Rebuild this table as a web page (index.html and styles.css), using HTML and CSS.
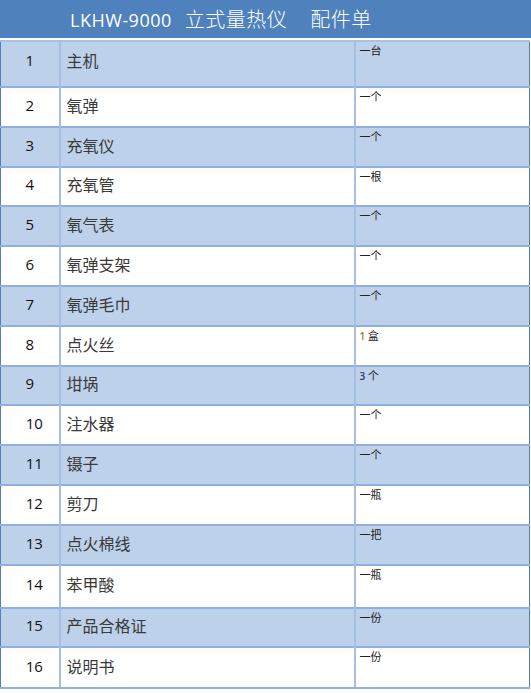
FILE: index.html
```html
<!DOCTYPE html>
<html lang="zh">
<head>
<meta charset="utf-8">
<link rel="stylesheet" href="styles.css">
</head>
<body>
<div class="sheet">
  <div class="title"><span class="model">LKHW-9000</span><span class="t1">立式量热仪</span><span class="t2">配件单</span></div>
  <table class="parts">
    <tr class="odd r1"><td class="no">1</td><td class="name">主机</td><td class="qty">一台</td></tr>
    <tr class="even"><td class="no">2</td><td class="name">氧弹</td><td class="qty">一个</td></tr>
    <tr class="odd"><td class="no">3</td><td class="name">充氧仪</td><td class="qty">一个</td></tr>
    <tr class="even"><td class="no">4</td><td class="name">充氧管</td><td class="qty">一根</td></tr>
    <tr class="odd"><td class="no">5</td><td class="name">氧气表</td><td class="qty">一个</td></tr>
    <tr class="even"><td class="no">6</td><td class="name">氧弹支架</td><td class="qty">一个</td></tr>
    <tr class="odd"><td class="no">7</td><td class="name">氧弹毛巾</td><td class="qty">一个</td></tr>
    <tr class="even"><td class="no">8</td><td class="name">点火丝</td><td class="qty"><span class="n1">1</span> 盒</td></tr>
    <tr class="odd"><td class="no">9</td><td class="name">坩埚</td><td class="qty"><span class="n3">3</span> 个</td></tr>
    <tr class="even"><td class="no dd">10</td><td class="name">注水器</td><td class="qty">一个</td></tr>
    <tr class="odd"><td class="no dd">11</td><td class="name">镊子</td><td class="qty">一个</td></tr>
    <tr class="even"><td class="no dd">12</td><td class="name">剪刀</td><td class="qty">一瓶</td></tr>
    <tr class="odd"><td class="no dd">13</td><td class="name">点火棉线</td><td class="qty">一把</td></tr>
    <tr class="even r14"><td class="no dd">14</td><td class="name">苯甲酸</td><td class="qty">一瓶</td></tr>
    <tr class="odd"><td class="no dd">15</td><td class="name">产品合格证</td><td class="qty">一份</td></tr>
    <tr class="even last"><td class="no dd">16</td><td class="name">说明书</td><td class="qty">一份</td></tr>
  </table>
</div>
</body>
</html>
```

FILE: styles.css
```css
html, body {
  margin: 0;
  padding: 0;
  background: #ffffff;
}
.sheet {
  width: 531px;
}
.title {
  height: 38px;
  background: #4f81bd;
  color: #ffffff;
  font-family: "Open Sans", "Noto Sans CJK SC", sans-serif;
  font-size: 18px;
  line-height: 37px;
  padding-left: 70px;
  box-sizing: border-box;
  margin-bottom: 2px;
  white-space: nowrap;
}
.title .model {
  letter-spacing: 0.5px;
}
.title .t1 {
  margin-left: 13px;
  font-family: "Noto Sans CJK SC", sans-serif;
  font-weight: 300;
  font-size: 20px;
  letter-spacing: 0.5px;
}
.title .t2 {
  margin-left: 23px;
  font-family: "Noto Sans CJK SC", sans-serif;
  font-weight: 300;
  font-size: 20px;
  letter-spacing: 0.5px;
}
.parts {
  width: 530px;
  border-collapse: collapse;
  table-layout: fixed;
  border-left: 1px solid #4f81bd;
  border-right: 1px solid #4f81bd;
}
.parts td {
  padding: 0;
  height: 39.8px;
  border-top: 2px solid #8fb0dc;
  box-sizing: border-box;
}
.parts tr.r1 td {
  height: 46px;
  border-top: 2px solid #a7c0e4;
}
.parts tr.r1 td.no,
.parts tr.r1 td.name {
  padding-bottom: 8px !important;
}
.parts tr.r14 td {
  height: 43px;
}
.parts tr.last td {
  height: 40.5px;
  border-bottom: 2px solid #8fb0dc;
}
.odd td {
  background: #bed1ea;
}
.even td {
  background: #ffffff;
}
.no {
  width: 59px;
  text-align: center;
  vertical-align: middle;
  font-family: "Open Sans", sans-serif;
  font-size: 15px;
  color: #111111;
  border-right: 2px solid #a4bfe3;
  padding-bottom: 4px !important;
}
.no.dd {
  padding-left: 9px !important;
}
.name {
  width: 295px;
  vertical-align: middle;
  padding-left: 6px !important;
  padding-bottom: 4px !important;
  font-family: "Noto Sans CJK SC", sans-serif;
  font-size: 16px;
  color: #3a3a3a;
  border-right: 2px solid #a4bfe3;
}
.qty {
  vertical-align: top;
  padding-left: 4px !important;
  padding-top: 1px !important;
  font-family: "Noto Sans CJK SC", sans-serif;
  font-size: 11px;
  line-height: 14px;
  color: #222222;
}
.n1 {
  color: #a8762c;
  font-family: "Open Sans", sans-serif;
  font-weight: 600;
  font-size: 10px;
}
.n3 {
  color: #2a3d6e;
  font-family: "Open Sans", sans-serif;
  font-weight: 600;
  font-size: 10px;
}
```
